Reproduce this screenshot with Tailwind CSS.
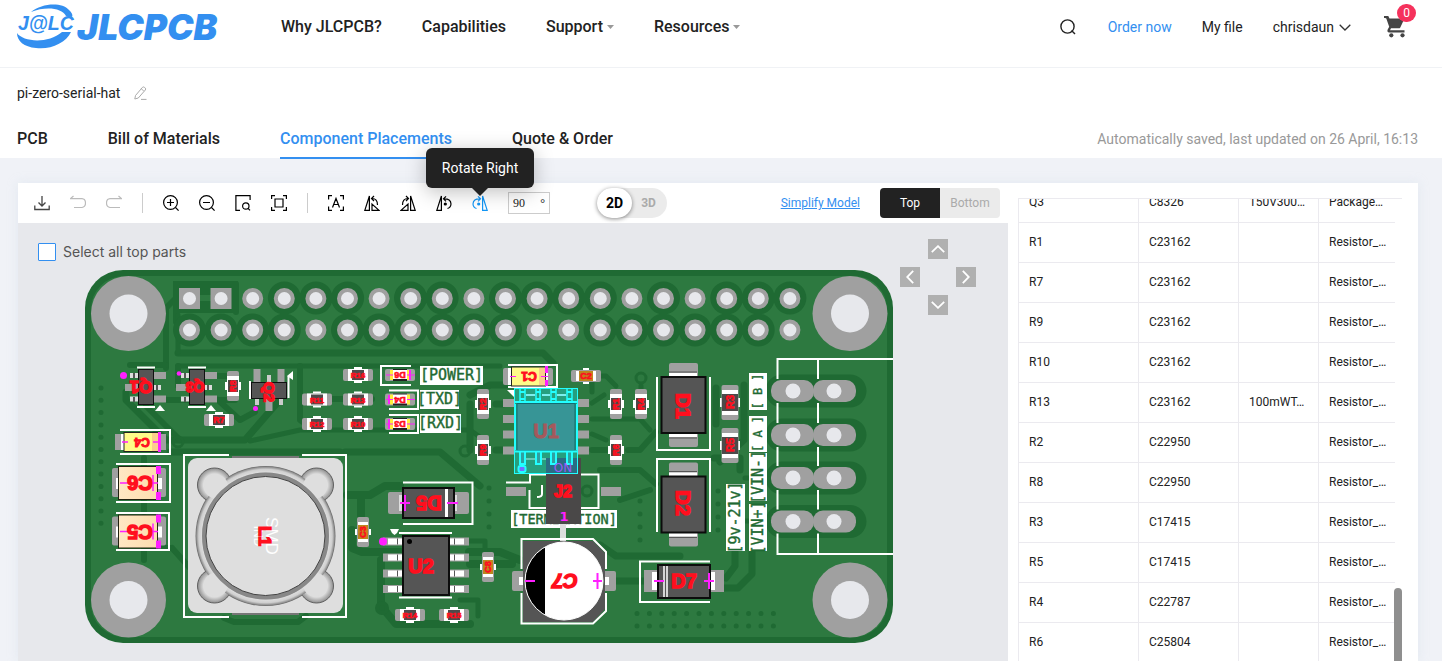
<!DOCTYPE html>
<html lang="en">
<head>
<meta charset="utf-8">
<meta name="viewport" content="width=device-width, initial-scale=1">
<title>JLCPCB - Component Placements</title>
<script src="https://cdn.jsdelivr.net/npm/@tailwindcss/browser@4"></script>
</head>
<body class="flex h-screen flex-col overflow-hidden bg-[#f0f2f7] font-['Roboto',sans-serif] text-sm text-[#222]">

<header class="flex h-[68px] shrink-0 items-start border-b border-[#f0f2f5] bg-white pl-[17px] pr-7">
  <a href="#" aria-label="JLCPCB home" class="mt-1 block shrink-0">
    <svg width="204" height="46" viewBox="17 4 204 46" fill="#338ff0">
      <path d="M31 12C42 3 62 2 69 10C72 13 73 15 72 17L66 16C62 8 46 6 31 12Z"/>
      <path d="M17 33C23 42 48 44 62 32L71 32C66 43 50 50 36 48C24 47 17 41 17 33Z"/>
      <text x="18" y="30" font-family="Liberation Sans, sans-serif" font-weight="700" font-style="italic" font-size="19.500">J@LC</text>
      <text x="77" y="40" font-family="Inter, sans-serif" font-weight="900" font-style="italic" font-size="35.500">JLCPCB</text>
    </svg>
  </a>
  <nav class="ml-[60px] mt-[15px] flex gap-10 text-base leading-6 font-medium">
    <a href="#">Why JLCPCB?</a>
    <a href="#">Capabilities</a>
    <a href="#" class="flex items-center gap-1">Support <svg width="7" height="4" viewBox="0 0 7 4" fill="#999"><path d="M0 0H7L3.500 4Z"/></svg></a>
    <a href="#" class="flex items-center gap-1">Resources <svg width="7" height="4" viewBox="0 0 7 4" fill="#999"><path d="M0 0H7L3.500 4Z"/></svg></a>
  </nav>
  <div class="ml-auto mt-[15px] flex h-6 items-center">
    <button type="button" aria-label="Search"><svg width="16" height="16" viewBox="0 0 16 16" fill="none" stroke="#222" stroke-width="1.400"><circle cx="7.500" cy="7.500" r="6.600"/><path d="M11.500 11.500L15 15"/></svg></button>
    <a href="#" class="ml-8 text-[#338ff0]">Order now</a>
    <a href="#" class="ml-[30px]">My file</a>
    <a href="#" class="ml-[30px] flex items-center gap-[5px]">chrisdaun <svg width="12" height="7" viewBox="0 0 12 7" fill="none" stroke="#333" stroke-width="1.300"><path d="M.7.7L6 6L11.300.7"/></svg></a>
    <a href="#" aria-label="Cart" class="relative ml-[33px] mr-2">
      <svg width="22" height="22" viewBox="0 0 22 22" fill="#444"><path d="M0 0H4.300L5.500 2.500H20.500L16.300 11.400Q15.800 12.300 14.800 12.300H7L6 14.300H20.500V16.500H5.200Q2.600 16 3.700 13.500L5.200 10.700L2.300 2.500L1.300 2H0Z"/><circle cx="7.300" cy="19.300" r="2.100"/><circle cx="18.500" cy="19.300" r="2.100"/></svg>
      <span class="absolute -top-3 left-[13px] flex h-[18px] w-[19px] items-center justify-center rounded-full bg-[#f5325c] text-xs text-white">0</span>
    </a>
  </div>
</header>

<section class="shrink-0 bg-white pt-4 pl-[17px] pr-6">
  <div class="flex h-[18px] items-center gap-[14px]">
    <span>pi-zero-serial-hat</span>
    <button type="button" aria-label="Rename project"><svg width="13" height="14" viewBox="0 0 13 14" fill="none" stroke="#aaa" stroke-width="1"><path d="M1.500 9.500L8.500 1.300Q9.500.5 10.600 1.400L11.300 2.100Q12.100 3 11.300 4L4.300 12L.8 13ZM7.300 2.700L9.800 5.200M7 13.400H12.500"/></svg></button>
  </div>
  <div class="mt-[23px] flex items-start justify-between">
    <nav class="flex items-start gap-[60px] text-base leading-6 font-medium">
      <a href="#" class="h-[33px] pt-0.5">PCB</a>
      <a href="#" class="h-[33px] pt-0.5">Bill of Materials</a>
      <a href="#" class="-mb-px h-[34px] border-b-2 border-[#338ff0] pt-0.5 text-[#338ff0]">Component Placements</a>
      <a href="#" class="h-[33px] pt-0.5">Quote &amp; Order</a>
    </nav>
    <p class="pt-1 text-[#999]">Automatically saved, last updated on 26 April, 16:13</p>
  </div>
</section>

<main class="mt-[25px] mr-6 ml-[18px] flex min-h-0 flex-1 bg-white shadow-[0_0_10px_rgba(200,215,230,0.35)]">
  <section class="flex min-w-0 flex-1 flex-col">
    <div class="flex h-10 shrink-0 items-center pl-1.5 pr-2">
      <div class="flex text-black">
        <button type="button" aria-label="Download" class="flex h-8 w-9 items-center justify-center"><svg width="16" height="16" viewBox="0 0 16 16" fill="none" stroke="#444" stroke-width="1.300"><path d="M8 1V10.500M4.500 7.500L8 11L11.500 7.500M.8 10.500V14.500H15.200V10.500"/></svg></button>
        <button type="button" aria-label="Undo" class="flex h-8 w-9 items-center justify-center"><svg width="16" height="16" viewBox="0 0 16 16" fill="none" stroke="#bbb" stroke-width="1.200"><path d="M3.500 1L.5 3.600H12Q15.500 4 15.500 8T12 12.500H4"/></svg></button>
        <button type="button" aria-label="Redo" class="flex h-8 w-9 items-center justify-center"><svg width="16" height="16" viewBox="0 0 16 16" fill="none" stroke="#bbb" stroke-width="1.200"><path d="M12.500 1L15.500 3.600H4Q.5 4 .5 8T4 12.500H14"/></svg></button>
      </div>
      <span class="mx-2.5 h-5 w-px bg-[#ccc]"></span>
      <div class="flex text-black">
        <button type="button" aria-label="Zoom in" class="flex h-8 w-9 items-center justify-center"><svg width="16" height="16" viewBox="0 0 16 16" fill="none" stroke="currentColor" stroke-width="1.200"><circle cx="7.500" cy="7.500" r="6.900"/><path d="M4 7.500H11M7.500 4V11M12.500 12.500L15.600 15.600"/></svg></button>
        <button type="button" aria-label="Zoom out" class="flex h-8 w-9 items-center justify-center"><svg width="16" height="16" viewBox="0 0 16 16" fill="none" stroke="currentColor" stroke-width="1.200"><circle cx="7.500" cy="7.500" r="6.900"/><path d="M4 7.500H11M12.500 12.500L15.600 15.600"/></svg></button>
        <button type="button" aria-label="Zoom to area" class="flex h-8 w-9 items-center justify-center"><svg width="16" height="16" viewBox="0 0 16 16" fill="none" stroke="currentColor" stroke-width="1.200"><path d="M5 15.400H.9V.6H15.100V5"/><circle cx="10.800" cy="11" r="3.200"/><path d="M13.100 13.300L15 15.400"/></svg></button>
        <button type="button" aria-label="Fit to screen" class="flex h-8 w-9 items-center justify-center"><svg width="16" height="16" viewBox="0 0 16 16" fill="none" stroke="currentColor" stroke-width="1.200"><path d="M.6 4V.6H4M12 .6H15.400V4M15.400 12V15.400H12M4 15.400H.6V12M4 4H12V12H4Z"/></svg></button>
      </div>
      <span class="mx-2.5 h-5 w-px bg-[#ccc]"></span>
      <div class="flex text-black">
        <button type="button" aria-label="Show designators" class="flex h-8 w-9 items-center justify-center"><svg width="16" height="16" viewBox="0 0 16 16" fill="none" stroke="currentColor" stroke-width="1.200"><path d="M4 .6H.6V4.500M.6 11.500V15.400H4M12 .6H15.400V4.500M15.400 11.500V15.400H12M4.500 12.500L8 3.500L11.500 12.500M5.600 9.500H10.400"/></svg></button>
        <button type="button" aria-label="Rotate left 90 degrees" class="flex h-8 w-9 items-center justify-center"><svg width="16" height="16" viewBox="0 0 16 16" fill="none" stroke="currentColor" stroke-width="1.200"><path d="M5.400 1V15.400H.8ZM8 15.400V9L15 15.400ZM8 3.500Q13.500 3.500 13.500 10M10 1L7.500 3.500L10 6"/></svg></button>
        <button type="button" aria-label="Rotate right 90 degrees" class="flex h-8 w-9 items-center justify-center"><svg width="16" height="16" viewBox="0 0 16 16" fill="none" stroke="currentColor" stroke-width="1.200"><path d="M10.600 1V15.400H15.200ZM8 15.400V9L1 15.400ZM8 3.500Q2.500 3.500 2.500 10M6 1L8.500 3.500L6 6"/></svg></button>
        <button type="button" aria-label="Rotate Left" class="flex h-8 w-9 items-center justify-center"><svg width="16" height="16" viewBox="0 0 16 16" fill="none" stroke="currentColor" stroke-width="1.200"><path d="M5.400 1V15.400H.8ZM8 3.800Q14.800 3.500 15 9Q14.800 12.500 11.500 13.500M10 1.300L7.500 3.800L10 6.300"/><circle cx="9.300" cy="9" r="1" fill="currentColor"/></svg></button>
        <button type="button" aria-label="Rotate Right" aria-describedby="tip" class="relative flex h-8 w-9 items-center justify-center text-[#1296f5]"><svg width="16" height="16" viewBox="0 0 16 16" fill="none" stroke="currentColor" stroke-width="1.200"><path d="M10.600 1V15.400H15.200ZM8 3.800Q1.200 3.500 1 9Q1.200 12.500 4.500 13.500M6 1.300L8.500 3.800L6 6.300"/><circle cx="6.700" cy="9" r="1" fill="currentColor"/></svg>
          <span id="tip" role="tooltip" class="absolute bottom-[31px] left-1/2 z-10 flex h-10 w-[108px] -translate-x-1/2 items-center justify-center rounded-md bg-[#222] text-white shadow-[0_4px_20px_rgba(0,0,0,0.25)]">Rotate Right<svg class="absolute top-full left-1/2 -translate-x-1/2" width="16" height="8" viewBox="0 0 16 8" fill="#222"><path d="M0 0H16L8 8Z"/></svg></span>
        </button>
      </div>
      <label class="ml-2.5 flex h-[22px] w-[42px] items-center border border-[#ccc] px-1 font-['Liberation_Serif',serif] text-xs"><input type="text" aria-label="Rotation angle" value="90" class="w-7 min-w-0 outline-none"><span>°</span></label>
      <div class="ml-[47px] flex h-[30px] w-[70px] rounded-full bg-[#ebebeb] font-bold">
        <button type="button" class="h-[30px] w-[35px] rounded-full bg-white text-black shadow-[0_1px_4px_rgba(0,0,0,0.45)]">2D</button>
        <button type="button" class="flex-1 pr-0.5 text-xs text-[#aaa]">3D</button>
      </div>
      <a href="#" class="ml-auto text-xs text-[#338ff0] underline">Simplify Model</a>
      <div class="ml-5 flex text-xs">
        <button type="button" class="h-[30px] w-[60px] rounded-l-sm bg-[#222] text-white">Top</button>
        <button type="button" class="h-[30px] w-[60px] rounded-r-sm bg-[#ebebeb] text-[#aaa]">Bottom</button>
      </div>
    </div>

    <div class="relative min-h-0 flex-1 overflow-hidden bg-[#e7e8ec]">
      <label class="absolute top-[19px] left-5 z-10 flex items-center gap-[7px] font-['Inter',sans-serif] text-sm text-[#555]"><input type="checkbox" class="size-[18px] appearance-none rounded-[1px] border border-[#338ff0] bg-white">Select all top parts</label>
      <div class="absolute top-4 right-8 z-10 grid grid-cols-3 gap-2">
        <button type="button" aria-label="Move up" class="col-start-2 flex size-5 items-center justify-center bg-[#b0b0b0]"><svg width="14" height="8" viewBox="0 0 14 8" fill="none" stroke="#fff" stroke-width="1.800"><path d="M.8 7.200L7 1.200L13.200 7.200"/></svg></button>
        <button type="button" aria-label="Move left" class="col-start-1 flex size-5 items-center justify-center bg-[#b0b0b0]"><svg width="8" height="14" viewBox="0 0 8 14" fill="none" stroke="#fff" stroke-width="1.800"><path d="M7.200.8L1.200 7L7.200 13.200"/></svg></button>
        <button type="button" aria-label="Move right" class="col-start-3 flex size-5 items-center justify-center bg-[#b0b0b0]"><svg width="8" height="14" viewBox="0 0 8 14" fill="none" stroke="#fff" stroke-width="1.800"><path d="M.8.8L6.800 7L.8 13.200"/></svg></button>
        <button type="button" aria-label="Move down" class="col-start-2 flex size-5 items-center justify-center bg-[#b0b0b0]"><svg width="14" height="8" viewBox="0 0 14 8" fill="none" stroke="#fff" stroke-width="1.800"><path d="M.8.8L7 6.800L13.200.8"/></svg></button>
      </div>

      <svg class="block w-full" viewBox="18 223 990 438" role="img" aria-label="Board top view">
        <defs>
          <!-- chip resistor, lying -->
          <g id="rh"><path d="M-4-7H4M-4 7H4" stroke="#fff" stroke-width="2"/><rect x="-15" y="-6" width="30" height="12" rx="2" fill="#a0a0a0"/><rect x="-10" y="-6" width="20" height="12" fill="#fff"/><rect x="-6" y="-5" width="12" height="10" fill="#4d4a4a"/></g>
          <g id="ch"><path d="M-3-7H3M-3 7H3" stroke="#fff" stroke-width="2"/><rect x="-15" y="-6" width="30" height="12" rx="2" fill="#a0a0a0"/><rect x="-10" y="-5" width="20" height="10" fill="#fff"/><rect x="-7" y="-5" width="14" height="10" fill="#bd861e"/></g>
          <!-- indicator LED with yellow terminals -->
          <g id="led"><rect x="-15" y="-6" width="30" height="12" rx="2" fill="#a0a0a0"/><rect x="-10" y="-5" width="20" height="10" fill="#ffee3c"/><rect x="-7" y="-6" width="14" height="12" fill="#222"/><rect x="-7" y="-5" width="14" height="9" fill="#fff"/><path d="M-14 0H-7M7 0H15" stroke="#ff1fff"/></g>
          <!-- two joined terminal pads -->
          <g id="term"><rect x="771" y="-11" width="43" height="22" rx="10" fill="#a0a0a0"/><rect x="813" y="-11" width="43" height="22" rx="10" fill="#a0a0a0"/><circle cx="793" r="7.500" fill="#e7e8ec"/><circle cx="834" r="7.500" fill="#e7e8ec"/></g>
          <g id="mount"><circle r="37.500" fill="#a0a0a0"/><circle r="19" fill="#e7e8ec"/></g>
          <g id="soic"><path d="M383 0H402M450 0H469" stroke="#a0a0a0" stroke-width="8"/><path d="M388 0H402M450 0H464" stroke="#fff" stroke-width="6"/><path d="M397.500-3V3M454.500-3V3" stroke="#555"/></g>
          <g id="dv"><rect x="-14" y="-42" width="29" height="84" rx="2" fill="#a0a0a0"/><rect x="-14" y="-32" width="28" height="64" fill="#fff"/><path d="M-14-33H14M-14 33H14" stroke="#555"/><rect x="-21.500" y="-28" width="44" height="56" fill="#555" stroke="#0c0c0c" stroke-width="2"/></g>
          <linearGradient id="beige"><stop offset="0" stop-color="#ffe8c4"/><stop offset="1" stop-color="#fddcae"/></linearGradient>
          <radialGradient id="ring"><stop offset=".84" stop-color="#444"/><stop offset=".87" stop-color="#8a8a8a"/><stop offset=".92" stop-color="#dcdcdc"/><stop offset=".96" stop-color="#cfcfcf"/><stop offset="1" stop-color="#808080"/></radialGradient>
          <radialGradient id="lobe"><stop offset=".65" stop-color="#dedede"/><stop offset="1" stop-color="#8e8e8e"/></radialGradient>
          <clipPath id="cap"><circle cx="564" cy="581" r="39"/></clipPath>
        </defs>

        <rect x="85" y="270" width="808" height="373" rx="38" fill="#1f6a33"/>
        <rect x="91" y="276" width="796" height="361" rx="33" fill="#2d7940"/>

        <!-- copper clearances around nets -->
        <g fill="none" stroke="#1f6a33" stroke-linejoin="round" stroke-linecap="round">
          <path d="M176 284H236V312M176 284V322M184 330H190" stroke-width="6"/>
          <path d="M174 300L166 308V368" stroke-width="6"/>
          <path d="M178 353H543L553 363" stroke-width="7"/>
          <path d="M178 315V352M178 366H500" stroke-width="5"/>
          <path d="M166 365H130M178 366V386M300 366V420L306 424M306 399H372" stroke-width="6"/>
          <path d="M126 392V400L166 440H245L278 402V390" stroke-width="7"/>
          <path d="M146 406L180 440M166 400H235M218 376H227M218 400L240 420L255 412" stroke-width="6"/>
          <path d="M250 441L300 430H470M470 430L484 440" stroke-width="5"/>
          <path d="M345 452H440L480 486M170 452H340" stroke-width="7"/>
          <path d="M144 458V512M144 548V560M172 548L190 568M144 548H172" stroke-width="6"/>
          <path d="M347 495H370L385 486H400M361 495V520M352 530V548L362 552H400" stroke-width="8"/>
          <path d="M381 560V606L396 624H470M469 552H500L520 560M470 564H512" stroke-width="8"/>
          <path d="M469 541H485V554M460 600H478V616" stroke-width="5"/>
          <path d="M470 395L490 385H508M470 404V450M496 404H503M496 450H503" stroke-width="7"/>
          <path d="M592 376H606L616 386M592 376V392M592 403L604 395M592 419H640L650 430M592 434L606 440M641 386V419" stroke-width="5"/>
          <path d="M592 450H606M628 450H640L656 432M600 470H640L656 484M620 500L650 490" stroke-width="6"/>
          <path d="M716 388V424M744 385V440L720 462M714 458H740V470" stroke-width="7"/>
          <path d="M735 552V566L726 578M752 552V574L738 588H724" stroke-width="7"/>
          <path d="M616 581H645M600 545L616 556H680" stroke-width="7"/>
          <path d="M224 618L234 622H298L306 616" stroke-width="6"/>
          <path d="M745 521H775M745 478H775" stroke-width="5"/>
          <circle cx="382" cy="608" r="5" stroke-width="4"/><circle cx="641" cy="378" r="5" stroke-width="3"/><circle cx="178" cy="442" r="5" stroke-width="3"/><circle cx="465" cy="451" r="5" stroke-width="3"/><circle cx="587" cy="491" r="5" stroke-width="3"/>
        </g>
        <g fill="none" stroke="#1f6a33" stroke-linecap="round">
          <path d="M782 391H850M782 435H850M782 478H850M782 521.500H850" stroke-width="33"/>
          <path d="M189.500 330H284.500M347.500 330H537M600 330H600.100M631.800 330H758.500M316 298H348M410.500 298H442.500M505.500 298H600.500M663.500 298H663.600M726.700 298H790.200M284.400 298H284.500" stroke-width="33" stroke-dasharray="0 31.600"/>
          <g stroke-width="5"><path d="M101 388V526" stroke-dasharray="0 12.300"/><path d="M637 613.500H775M637 626H775" stroke-dasharray="0 12.400"/><path d="M640 501V541M718 491V541M489 488V528" stroke-dasharray="0 13"/></g>
        </g>
        <rect x="173" y="281" width="65" height="32" fill="#1f6a33"/>
        <path d="M186 298H230" stroke="#2d7940" stroke-width="6"/>

        <!-- 40 pin header -->
        <g stroke-linecap="round">
          <path d="M252.700 298.500H791M189.500 330H791" stroke="#a0a0a0" stroke-width="21" stroke-dasharray="0 31.600"/>
          <rect x="179" y="288" width="21" height="21" fill="#a0a0a0"/><rect x="210.500" y="288" width="21" height="21" fill="#a0a0a0"/>
          <path d="M189.500 298.500H791M189.500 330H791" stroke="#e7e8ec" stroke-width="13" stroke-dasharray="0 31.600"/>
        </g>
        <use href="#mount" x="128.500" y="313.500"/><use href="#mount" x="850" y="313.500"/><use href="#mount" x="128.500" y="600"/><use href="#mount" x="850" y="600"/>

        <!-- chip parts -->
        <use href="#rh" x="219" y="420"/><use href="#rh" x="358" y="375"/><use href="#rh" x="317" y="399.500"/><use href="#rh" x="358" y="399.500"/><use href="#rh" x="317" y="424"/><use href="#rh" x="358" y="424"/><use href="#rh" x="410" y="615"/><use href="#rh" x="454" y="615"/>
        <use href="#ch" x="586" y="376"/>
        <g transform="rotate(90)"><use href="#rh" x="386" y="-233"/><use href="#rh" x="404" y="-483"/><use href="#rh" x="450" y="-483"/><use href="#rh" x="404" y="-616"/><use href="#rh" x="404" y="-641"/><use href="#rh" x="450" y="-616"/><use href="#ch" x="532" y="-363"/><use href="#ch" x="567" y="-488"/></g>
        <g id="r3"><path d="M721 398V407M739 398V407" stroke="#fff" stroke-width="2"/><rect x="721.500" y="385" width="17" height="35" rx="2" fill="#a0a0a0"/><rect x="722" y="390" width="16" height="25" fill="#fff"/><rect x="722" y="394" width="16" height="17" fill="#4d4a4a"/></g>
        <use href="#r3" y="43"/>

        <!-- transistors -->
        <g id="sot"><path d="M154 375.500H166M154 399H166M125 387.500H139" stroke="#a0a0a0" stroke-width="7"/><path d="M130 375.500H139M130 399H139M154 387.500H161" stroke="#ddd" stroke-width="5"/><path d="M134 373V378M134 397V402M157 385V390" stroke="#555" stroke-width="2"/><path d="M137 367.500H155M137 407H155" stroke="#fff" stroke-width="2"/><rect x="138.500" y="369.500" width="15" height="35" fill="#555" stroke="#111"/><path d="M155 411L160 405L165 411Z" fill="#fff"/></g>
        <use href="#sot" x="51"/>
        <path d="M257 369V382M281 369V382M269 398V411" stroke="#a0a0a0" stroke-width="7"/><path d="M269 375V382M257 398V405M281 398V405" stroke="#ccc" stroke-width="4"/><path d="M250 381V399M288.500 376V398" stroke="#fff" stroke-width="2"/><rect x="251.500" y="382.500" width="35" height="16" fill="#555" stroke="#111"/><path d="M293 371V380L287 376Z" fill="#fff"/>

        <!-- LEDs with legends -->
        <use href="#led" x="400" y="375"/><use href="#led" x="400" y="399.500"/><use href="#led" x="400" y="424"/>
        <path d="M411 366H381V385H411M389 390.500H418V409H389M389 415H418V433H389" fill="none" stroke="#fff" stroke-width="2"/>
        <g fill="#fff"><rect x="420" y="366" width="63" height="19"/><rect x="420" y="390" width="39" height="19"/><rect x="420" y="414" width="41" height="19"/><rect x="511" y="510" width="106" height="18"/><rect x="749" y="373" width="18" height="37"/><rect x="749" y="416" width="18" height="36"/><rect x="749" y="453" width="18" height="48"/><rect x="749" y="504" width="18" height="47"/><rect x="726" y="484" width="19" height="67"/></g>
        <g fill="#1f6a33" stroke="#1f6a33" stroke-width=".4" font-family="DejaVu Sans Mono, monospace" font-size="15" text-anchor="middle"><text x="451.500" y="380">[POWER]</text><text x="439.500" y="404">[TXD]</text><text x="440.500" y="428">[RXD]</text><text x="564" y="524" font-size="13.500">[TERMINATION]</text>
          <g transform="rotate(-90)"><text x="-391.500" y="762" font-size="12">[ B ]</text><text x="-434" y="762" font-size="12">[ A ]</text><text x="-477" y="763">[VIN-]</text><text x="-527.500" y="763">[VIN+]</text><text x="-517.500" y="740">[9v-21v]</text></g></g>

        <!-- C4, C6, C5, C1 -->
        <path d="M120 430H170V454H120M116 464H170V502H116M116 513H169V550H116" fill="none" stroke="#fff" stroke-width="2"/>
        <rect x="115" y="434" width="51" height="16" fill="#a0a0a0"/><rect x="121" y="434" width="40" height="16" fill="#fff"/><rect x="124" y="432.500" width="34" height="19" fill="#fffb89" stroke="#222"/><rect x="152" y="433" width="6" height="18" fill="#fbcf8b"/><path d="M159.500 432V452" stroke="#ff1fff" stroke-width="3"/><path d="M122 442H128M153 442H160" stroke="#ff1fff" stroke-width="1.500"/>
        <g id="c6"><rect x="112" y="468" width="54" height="29" rx="2" fill="#a0a0a0"/><rect x="116" y="478" width="46" height="11" fill="#fff"/><rect x="118.500" y="466.500" width="39" height="33" fill="url(#beige)" stroke="#221"/><path d="M158.500 466V474M158.500 492V500" stroke="#ff1fff" stroke-width="5"/><path d="M120 483H129M151 483H158M153 475V491" stroke="#ff1fff" stroke-width="1.500"/></g>
        <use href="#c6" y="48.500"/>
        <path d="M508 365H557V387H508" fill="none" stroke="#fff" stroke-width="2"/><rect x="503" y="368" width="50" height="17" rx="2" fill="#a0a0a0"/><rect x="508" y="368" width="40" height="17" fill="#fff"/><rect x="511.500" y="367" width="34" height="19" fill="#fffb89" stroke="#222"/><rect x="539" y="368" width="6" height="17" fill="#fbcf8b"/><path d="M546.500 366V373M546.500 380V386" stroke="#ff1fff" stroke-width="3"/><path d="M510 376.500H516M541 376.500H548" stroke="#ff1fff"/>

        <!-- L1 power inductor -->
        <path d="M229 455H184V617H229M302 455H346V617H302" fill="none" stroke="#fff" stroke-width="2"/>
        <path d="M232 457.500H299M232 613.500H299" stroke="#777" stroke-width="3"/>
        <rect x="188" y="458" width="155" height="155" rx="9" fill="#dedede"/>
        <circle cx="265.500" cy="536" r="70" fill="#707070"/>
        <g fill="url(#lobe)" stroke="#606060"><circle cx="214.500" cy="485" r="17"/><circle cx="316.500" cy="485" r="17"/><circle cx="214.500" cy="586" r="17"/><circle cx="316.500" cy="586" r="17"/></g>
        <circle cx="265.500" cy="536" r="69.500" fill="url(#ring)"/>
        <g fill="#dedede"><circle cx="216" cy="486.500" r="12"/><circle cx="315" cy="486.500" r="12"/><circle cx="216" cy="584.500" r="12"/><circle cx="315" cy="584.500" r="12"/></g>
        <circle cx="265.500" cy="536" r="61.500" fill="none" stroke="#888" stroke-width="4"/>
        <circle cx="265.500" cy="536" r="59.500" fill="#dedede" stroke="#444"/>
        <g fill="#fff" font-family="Liberation Sans, sans-serif" text-anchor="middle"><text transform="translate(266 536) rotate(90)" font-size="17">SMD</text><text transform="translate(254 536) rotate(90)" font-size="12">IND</text></g>

        <!-- D5, D1, D2, D7 -->
        <path d="M403 482.500H472.500V524H403" fill="none" stroke="#fff" stroke-width="2"/><rect x="388" y="492" width="81" height="22" rx="2" fill="#a0a0a0"/><rect x="399" y="495" width="58" height="16" fill="#ddd"/><rect x="403" y="488" width="51" height="30" fill="#555" stroke="#0c0c0c" stroke-width="2"/><path d="M446.500 489V517" stroke="#fff" stroke-width="3"/>
        <path d="M657 377V450H710V377M657 532V459H710V532" fill="none" stroke="#fff" stroke-width="2"/><use href="#dv" x="683" y="405"/><use href="#dv" x="683" y="504.500"/>
        <path d="M710 561.500H640V602H710" fill="none" stroke="#fff" stroke-width="2"/><rect x="644" y="570" width="80" height="22" fill="#a0a0a0"/><rect x="652" y="572" width="63" height="18" fill="#fff"/><rect x="658" y="565" width="52" height="33" fill="#555" stroke="#0c0c0c" stroke-width="2"/><path d="M664 566V597M667 566V597" stroke="#fff" stroke-width="1.500"/>

        <!-- U2 -->
        <path d="M399 533H452M399 597.500H452" stroke="#fff" stroke-width="2"/><use href="#soic" y="541.500"/><use href="#soic" y="557.500"/><use href="#soic" y="573.500"/><use href="#soic" y="589"/><rect x="403" y="536" width="46" height="59" fill="#555" stroke="#0c0c0c" stroke-width="2"/><circle cx="409.500" cy="541.500" r="2.500" fill="#000"/><path d="M390 529H399L397 533L394.500 535L392 533Z" fill="#fff"/>

        <!-- C7 electrolytic -->
        <rect x="560" y="524" width="6" height="18" fill="#ddd"/><rect x="512" y="571" width="104" height="20" rx="2" fill="#a0a0a0"/><rect x="519" y="577" width="90" height="8" fill="#fff"/>
        <path d="M523 541H593L605 553V609L593 622H523Z" fill="#555"/><path d="M521.500 569V539H593L606 552V569M521.500 593V623.500H593L606 611V593" fill="none" stroke="#fff" stroke-width="2"/>
        <g clip-path="url(#cap)"><rect x="524" y="541" width="80" height="80" fill="#fff"/><rect x="524" y="541" width="21" height="80" fill="#000"/></g><circle cx="564" cy="581" r="39" fill="none" stroke="#fff"/>

        <!-- terminal block -->
        <path d="M893 359H777.500V554H893M818 359V554" fill="none" stroke="#fff" stroke-width="2"/>
        <g stroke="#1f6a33" stroke-width="24"><path d="M776 391H820M776 435H820M776 478H820M776 521.500H820"/></g>
        <use href="#term" y="391"/><use href="#term" y="435"/><use href="#term" y="478"/><use href="#term" y="521.500"/>

        <!-- J2 -->
        <path d="M506 482.500H530V474.500H598.500V508H529.500V490" fill="none" stroke="#fff" stroke-width="2"/><path d="M506 491.500H526M601 491.500H621" stroke="#a0a0a0" stroke-width="9"/><path d="M542 485V494Q542 497 537 497" fill="none" stroke="#fff" stroke-width="2"/><rect x="546" y="458" width="35" height="66" fill="#4a4848"/>

        <!-- U1, selected -->
        <path d="M503 403H514M503 419H514M503 434.500H514M503 450.500H514M578 403H589M578 419H589M578 434.500H589M578 450.500H589" stroke="#a0a0a0" stroke-width="8"/>
        <path d="M507 390H514V397Z" fill="#fff"/>
        <rect x="514.500" y="388.500" width="63" height="85" fill="#23b4a0" fill-opacity=".65" stroke="#22ffff"/>
        <rect x="546" y="458" width="31" height="15" fill="#2b6c84"/>
        <path d="M526 395H535M542 395H550M557 395H566" stroke="#7ceeee" stroke-width="2"/>
        <path d="M520 389V403M525 389V403M536 389V403M540 389V403M551 389V403M556 389V403M567 389V403M572 389V403" stroke="#22ffff" stroke-width="1.500"/><path d="M520 392H525M520 399H525M536 392H541M536 399H541M551 392H556M551 399H556M567 392H572M567 399H572" stroke="#22ffff" stroke-width="2"/>
        <path d="M520 451V464H525V451M536 451V464H541V451M551 451V464H556V451M567 451V464H572V451" fill="#30a0a0" stroke="#22ffff" stroke-width="2"/><path d="M526 459H535M542 459H546" stroke="#a8f2f2"/>
        <rect x="517" y="403.500" width="58" height="47" fill="#379596" stroke="#126c70"/><path d="M515 450V404M577 404V450" stroke="#22ffff" stroke-width="2"/><path d="M515 402H577M515 451.500H577" stroke="#22ffff" stroke-width="2"/>
        <rect x="518.500" y="466" width="7" height="6" rx="2" fill="#7070ff" stroke="#22ffff" stroke-width="2"/>

        <!-- polarity and pin one marks -->
        <g fill="#ff1fff"><circle cx="123.500" cy="375.500" r="3.500"/><circle cx="179" cy="373.500" r="2.300"/><circle cx="255.500" cy="408.500" r="2.500"/><circle cx="383" cy="541.500" r="4"/></g>
        <path d="M400 503H410M405 495V511M447 503H458M654 581H664M704 581H714M709 573V589M525 581H535M593 581H602M597.500 573V589M410 370V380M389 395V404M389 419V429" stroke="#ff1fff" stroke-width="2" fill="none"/>

        <!-- designators -->
        <g fill="#ff0f1e" stroke="#ff0f1e" font-family="Liberation Sans, sans-serif" font-weight="700" text-anchor="middle">
          <g font-size="20" stroke-width="1.500">
            <text transform="translate(141 381) rotate(180)" font-size="17">Q1</text><text transform="translate(195 382) rotate(180)" font-size="14">Q3</text><text transform="translate(264 392) rotate(90)" font-size="15">Q2</text>
            <text transform="translate(140 476) rotate(180)">C6</text><text transform="translate(140 525) rotate(180)">C5</text><text transform="translate(142 438) rotate(180)" font-size="12" stroke-width="1">C4</text><text transform="translate(529 372) rotate(180)" font-size="12" stroke-width="1">C1</text>
            <text transform="translate(259 536) rotate(90)" font-size="17">L1</text><text transform="translate(429 496) rotate(180)">D5</text><text transform="translate(676 406) rotate(90)">D1</text><text transform="translate(676 503) rotate(90)">D2</text>
            <text x="684" y="588">D7</text><text x="421" y="573">U2</text><text x="563" y="497" font-size="16">J2</text><text transform="translate(565 574) rotate(180)" font-style="italic">C7</text>
          </g>
          <g font-size="9" stroke-width=".6"><text x="219" y="423">R7</text><text x="358" y="378" font-size="8">R16</text><text x="317" y="402.500" font-size="8">R11</text><text x="358" y="402.500" font-size="8">R13</text><text x="317" y="427" font-size="8">R12</text><text x="358" y="427" font-size="8">R10</text><text x="410" y="618" font-size="8">R14</text><text x="454" y="618" font-size="8">R15</text><text x="586" y="379">C2</text><text transform="translate(400 372) rotate(180)">D6</text><text transform="translate(400 396.500) rotate(180)">D4</text><text transform="translate(400 421) rotate(180)">D3</text>
            <g transform="rotate(-90)"><text x="-386" y="236">R8</text><text x="-404" y="486">R2</text><text x="-450" y="486">R9</text><text x="-404" y="619">R1</text><text x="-404" y="644">R4</text><text x="-450" y="619">R6</text><text x="-532" y="366">C3</text><text x="-567" y="491">C8</text><text x="-402" y="734" font-size="11">R3</text><text x="-445" y="734" font-size="11">R5</text></g></g>
        </g>
        <g text-anchor="middle"><text x="546" y="438" font-family="Liberation Sans, sans-serif" font-weight="700" font-size="20" fill="#a4595c" stroke="#a4595c">U1</text><text x="563" y="472" font-family="DejaVu Sans, sans-serif" font-size="12" fill="#9a5cf5">ON</text><text x="564" y="521" font-family="DejaVu Sans, sans-serif" font-weight="700" font-size="13" fill="#ff1fff">1</text></g>
      </svg>
    </div>
  </section>

  <section aria-label="Parts" class="relative mt-[15px] ml-2.5 mr-4 w-[384px] shrink-0 overflow-hidden border-t border-[#ebeaef]">
    <table class="-mt-[17px] w-[376px] table-fixed border-collapse text-left text-xs">
      <colgroup><col class="w-[120px]"><col class="w-[100px]"><col class="w-20"><col class="w-[76px]"></colgroup>
      <tbody class="[&_td]:h-10 [&_td]:truncate [&_td]:border-b [&_td]:border-l [&_td]:border-[#ebeaef] [&_td]:px-2.5 [&_td:last-child]:pr-1.5">
        <tr><td>Q3</td><td>C8326</td><td>150V300…</td><td>Package…</td></tr>
        <tr><td>R1</td><td>C23162</td><td></td><td>Resistor_…</td></tr>
        <tr><td>R7</td><td>C23162</td><td></td><td>Resistor_…</td></tr>
        <tr><td>R9</td><td>C23162</td><td></td><td>Resistor_…</td></tr>
        <tr><td>R10</td><td>C23162</td><td></td><td>Resistor_…</td></tr>
        <tr><td>R13</td><td>C23162</td><td>100mWT…</td><td>Resistor_…</td></tr>
        <tr><td>R2</td><td>C22950</td><td></td><td>Resistor_…</td></tr>
        <tr><td>R8</td><td>C22950</td><td></td><td>Resistor_…</td></tr>
        <tr><td>R3</td><td>C17415</td><td></td><td>Resistor_…</td></tr>
        <tr><td>R5</td><td>C17415</td><td></td><td>Resistor_…</td></tr>
        <tr><td>R4</td><td>C22787</td><td></td><td>Resistor_…</td></tr>
        <tr><td>R6</td><td>C25804</td><td></td><td>Resistor_…</td></tr>
      </tbody>
    </table>
    <span class="absolute right-0 bottom-0 h-[73px] w-2 rounded-t-full bg-[#8f8f8f]"></span>
  </section>
</main>
</body>
</html>
